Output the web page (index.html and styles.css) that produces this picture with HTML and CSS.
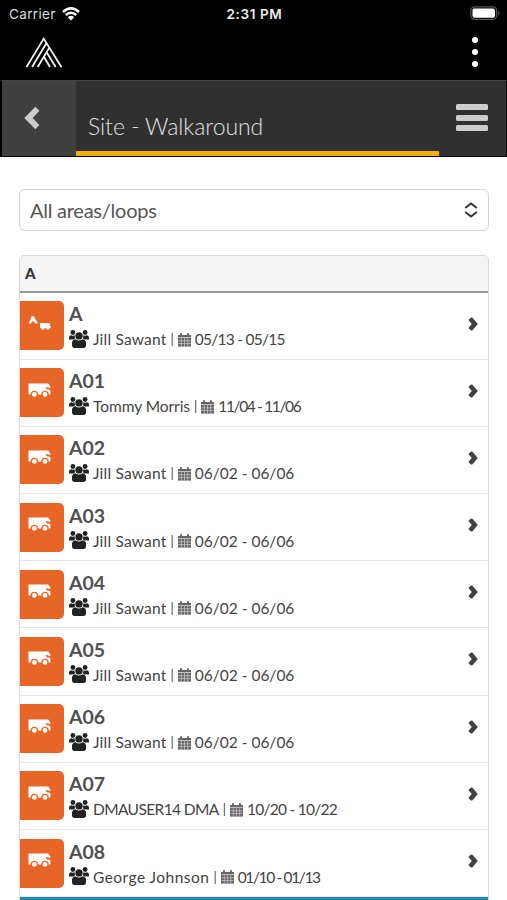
FILE: index.html
```html
<!DOCTYPE html>
<html lang="en">
<head>
<meta charset="utf-8">
<title>Site - Walkaround</title>
<link rel="stylesheet" href="styles.css">
</head>
<body>
<svg class="defs" aria-hidden="true">
  <symbol id="people" viewBox="0 0 20 18">
    <circle cx="3.9" cy="2.5" r="2.4"/><circle cx="16.1" cy="2.5" r="2.4"/>
    <path d="M0 9.6V7.5Q.2 5.3 2.3 5.2Q4 6.3 5.6 5.3L6 8.5L4.5 9.6Z"/>
    <path d="M20 9.6V7.5Q19.8 5.3 17.7 5.2Q16 6.3 14.4 5.3L14 8.5L15.5 9.6Z"/>
    <circle cx="10" cy="5.9" r="3.7"/>
    <path d="M3 15V13Q3 9.8 6.4 9.3Q10 11.8 13.6 9.3Q17 9.8 17 13V15Q17 18 14.5 18H5.5Q3 18 3 15Z"/>
  </symbol>
  <symbol id="calendar" viewBox="0 0 13 14">
    <path d="M0 2H2V.3H4V2H9V.3H11V2H13V4.3H0Z"/>
    <path d="M0 4.8H13V13.6H0Z"/>
    <path class="grid-lines" d="M0 7.8H13M0 10.6H13M3.3 5V13.6M6.5 5V13.6M9.7 5V13.6"/>
  </symbol>
  <symbol id="rv" viewBox="0 0 23 15">
    <path d="M.5 .5H20.2L22.4 3.5V4.7H19.3L22.4 7.7V11.6H.5Z"/>
    <circle class="cut" cx="6.4" cy="11.4" r="3.7"/><circle class="cut" cx="17" cy="11.4" r="3.7"/>
    <circle cx="6.4" cy="11.4" r="2.4"/><circle cx="17" cy="11.4" r="2.4"/>
    <path class="cut" d="M17.5 4.2H20L21.6 6.5H19Z"/>
  </symbol>
  <symbol id="camp" viewBox="0 0 23 15">
    <path d="M3.6.3H5.8L10 7.4H7.2L5 4.8L2.8 7.4H.5L2.2 4.2Z"/>
    <path d="M12 7H21.4L22.6 8.4L21.2 9L22.6 10.2V12.2H21.2A1.5 1.5 0 0 1 18.2 12.2H16.3A1.5 1.5 0 0 1 13.3 12.2L12 11.8Z"/>
  </symbol>
  <symbol id="next" viewBox="0 0 10 14">
    <path d="M.4 3L3 .4H4.2L9.8 7L4.2 13.6H3L.4 11L3.8 7Z"/>
  </symbol>
</svg>
<header class="top">
  <div class="status">
    <div class="carrier"><span>Carrier</span>
      <svg class="wifi" viewBox="0 0 18 14"><path d="M1 5Q9-2.2 17 5M3.8 8Q9 3.5 14.2 8"/><path class="solid" d="M5.8 10.2Q9 7.5 12.2 10.2L9 13.4Z"/></svg>
    </div>
    <span class="clock">2:31 PM</span>
    <svg class="battery" viewBox="0 0 30 15"><rect class="shell" x=".8" y=".8" width="25.8" height="12.6" rx="3.8"/><rect class="charge" x="2.5" y="2.4" width="22.5" height="9.4" rx="2"/><path class="tip" d="M28 4.8Q31 7.1 28 9.4Z"/></svg>
  </div>
  <div class="brand">
    <svg class="logo" viewBox="0 0 38 32"><path d="M1.5 31L18.7 2.6L36.4 31M7.1 31L21.5 7M12.7 31L24.3 11.6M30.7 31L21.6 16.2M25 31L18.9 20.8"/></svg>
    <div class="more"><i></i><i></i><i></i></div>
  </div>
</header>
<nav class="bar">
  <div class="back"><svg viewBox="0 0 16 24"><path d="M11.3.7L15.4 4.8L8.7 12L15.4 19.1L11.3 23.3L.3 12Z"/></svg></div>
  <h1>Site - Walkaround</h1>
  <div class="menu"><i></i><i></i><i></i></div>
</nav>
<main>
  <div class="select"><span>All areas/loops</span><svg viewBox="0 0 14 16"><path d="M1.2 6L7 1.5L12.8 6M1.2 10L7 14.5L12.8 10"/></svg></div>
  <section class="list">
    <h2>A</h2>
    <article class="row"><div class="tile"><svg><use href="#camp"/></svg></div><div class="info"><h3>A</h3><p><svg class="people"><use href="#people"/></svg><span class="name">Jill Sawant</span><b>|</b><svg class="cal"><use href="#calendar"/></svg><span class="date snug">05/13 - 05/15</span></p></div><svg class="next"><use href="#next"/></svg></article>
    <article class="row"><div class="tile"><svg><use href="#rv"/></svg></div><div class="info"><h3>A01</h3><p><svg class="people"><use href="#people"/></svg><span class="name even">Tommy Morris</span><b>|</b><svg class="cal"><use href="#calendar"/></svg><span class="date tight">11/04 - 11/06</span></p></div><svg class="next"><use href="#next"/></svg></article>
    <article class="row"><div class="tile"><svg><use href="#rv"/></svg></div><div class="info"><h3>A02</h3><p><svg class="people"><use href="#people"/></svg><span class="name">Jill Sawant</span><b>|</b><svg class="cal"><use href="#calendar"/></svg><span class="date">06/02 - 06/06</span></p></div><svg class="next"><use href="#next"/></svg></article>
    <article class="row"><div class="tile"><svg><use href="#rv"/></svg></div><div class="info"><h3>A03</h3><p><svg class="people"><use href="#people"/></svg><span class="name">Jill Sawant</span><b>|</b><svg class="cal"><use href="#calendar"/></svg><span class="date">06/02 - 06/06</span></p></div><svg class="next"><use href="#next"/></svg></article>
    <article class="row"><div class="tile"><svg><use href="#rv"/></svg></div><div class="info"><h3>A04</h3><p><svg class="people"><use href="#people"/></svg><span class="name">Jill Sawant</span><b>|</b><svg class="cal"><use href="#calendar"/></svg><span class="date">06/02 - 06/06</span></p></div><svg class="next"><use href="#next"/></svg></article>
    <article class="row"><div class="tile"><svg><use href="#rv"/></svg></div><div class="info"><h3>A05</h3><p><svg class="people"><use href="#people"/></svg><span class="name">Jill Sawant</span><b>|</b><svg class="cal"><use href="#calendar"/></svg><span class="date">06/02 - 06/06</span></p></div><svg class="next"><use href="#next"/></svg></article>
    <article class="row"><div class="tile"><svg><use href="#rv"/></svg></div><div class="info"><h3>A06</h3><p><svg class="people"><use href="#people"/></svg><span class="name">Jill Sawant</span><b>|</b><svg class="cal"><use href="#calendar"/></svg><span class="date">06/02 - 06/06</span></p></div><svg class="next"><use href="#next"/></svg></article>
    <article class="row"><div class="tile"><svg><use href="#rv"/></svg></div><div class="info"><h3>A07</h3><p><svg class="people"><use href="#people"/></svg><span class="name caps">DMAUSER14 DMA</span><b>|</b><svg class="cal"><use href="#calendar"/></svg><span class="date snug">10/20 - 10/22</span></p></div><svg class="next"><use href="#next"/></svg></article>
    <article class="row"><div class="tile"><svg><use href="#rv"/></svg></div><div class="info"><h3>A08</h3><p><svg class="people"><use href="#people"/></svg><span class="name wide">George Johnson</span><b>|</b><svg class="cal"><use href="#calendar"/></svg><span class="date tight">01/10 - 01/13</span></p></div><svg class="next"><use href="#next"/></svg></article>
    <div class="footer-edge"></div>
  </section>
</main>
</body>
</html>
```
FILE: styles.css
```css
* { box-sizing: border-box; }
body { margin: 0; height: 900px; overflow: hidden; background: #fff; color: #444; font-family: Lato, "Liberation Sans", sans-serif; }
h1, h2, h3, p { margin: 0; }
svg { display: block; flex: none; }
.defs { display: none; }
.top { height: 80px; background: #000; color: #fff; }
.status { height: 27px; display: grid; grid-template-columns: 1fr auto 1fr; align-items: center; padding: 0 7px 0 9px; font-family: Inter, sans-serif; font-size: 13.5px; }
.carrier { display: flex; align-items: center; gap: 6px; color: #ddd; letter-spacing: .35px; }
.wifi { width: 18px; height: 14px; fill: none; stroke: #fff; stroke-width: 2.5; }
.wifi .solid { fill: #fff; stroke: none; }
.clock { font-weight: 600; font-size: 13.5px; letter-spacing: .6px; color: #eee; }
.battery { width: 30px; height: 15px; justify-self: end; }
.shell { fill: none; stroke: #555; stroke-width: 1.2; }
.charge { fill: #fff; }
.tip { fill: #555; }
.brand { display: flex; justify-content: space-between; padding: 9px 29px 0 25px; }
.logo { width: 38px; height: 32px; fill: none; stroke: #f4f4f4; stroke-width: 1.8; }
.more { display: flex; flex-direction: column; gap: 6px; padding-top: 1px; }
.more i { width: 6px; height: 6px; border-radius: 50%; background: #fff; }
.bar { height: 77px; display: flex; background: #303030; border: solid #000; border-width: 0 1px 1px 2px; border-top: 1px solid #444; }
.back { width: 74px; background: #404040; padding: 25px 0 0 22px; }
.back svg { width: 16px; height: 24px; fill: #ccc; }
.bar h1 { width: 363px; border-bottom: 5px solid #f8ae0b; padding: 30px 0 0 12px; color: #e0e0e0; font-weight: 300; font-size: 23px; line-height: 30px; letter-spacing: -.07px; white-space: nowrap; }
.menu { width: 32px; margin: 23px 0 0 17px; display: flex; flex-direction: column; gap: 4.5px; }
.menu i { height: 6px; border-radius: 1.5px; background: #ccc; }
main { padding: 32px 18px 0 19px; }
.select { height: 42px; display: flex; align-items: center; justify-content: space-between; border: 1.5px solid #d5d5d5; border-radius: 6px; padding: 0 10px; font-size: 20px; letter-spacing: -.25px; color: #555; }
.select svg { width: 14px; height: 16px; fill: none; stroke: #333; stroke-width: 1.9; }
.list { margin-top: 24px; height: 680px; border: 1.5px solid #d8d8d8; border-radius: 5px 5px 0 0; }
h2 { height: 36.5px; background: #f4f4f4; border-bottom: 2px solid #999; border-radius: 4px 4px 0 0; padding-left: 5px; line-height: 35px; font-size: 15px; font-weight: 900; color: #333; }
.row { height: 67.2px; display: flex; border-bottom: 1px solid #e5e5e5; }
.tile { width: 44px; height: 49px; margin-top: 8.5px; border-radius: 0 5px 5px 0; background: #e76526; padding: 14.5px 0 0 8px; flex: none; }
.tile svg { width: 23px; height: 15px; fill: #fff; }
.cut { fill: #e76526; }
.info { flex: 1; padding: 8.5px 0 0 5px; }
h3 { height: 25px; line-height: 25px; font-size: 19.5px; font-weight: 700; color: #505050; }
.info p { height: 27px; display: flex; align-items: center; font-size: 15.5px; line-height: 27px; white-space: nowrap; }
.people { width: 20px; height: 18px; fill: #222; margin: -2px 4px 0 0; }
.name { letter-spacing: .2px; }
.name.even { letter-spacing: -.05px; }
.name.caps { letter-spacing: -.6px; }
.name.wide { letter-spacing: .47px; }
.date.snug { letter-spacing: -.73px; }
.date.tight { letter-spacing: -1.35px; }
.info b { font-weight: 400; font-size: 13px; margin: 0 4px; line-height: 1; }
.cal { width: 13px; height: 14px; margin-right: 4px; fill: #666; }
.grid-lines { stroke: #ddd; stroke-width: .6; }
.next { width: 10px; height: 14px; margin: 24px 10px 0 0; fill: #404040; }
.footer-edge { height: 5px; background: #2186b0; }
```
